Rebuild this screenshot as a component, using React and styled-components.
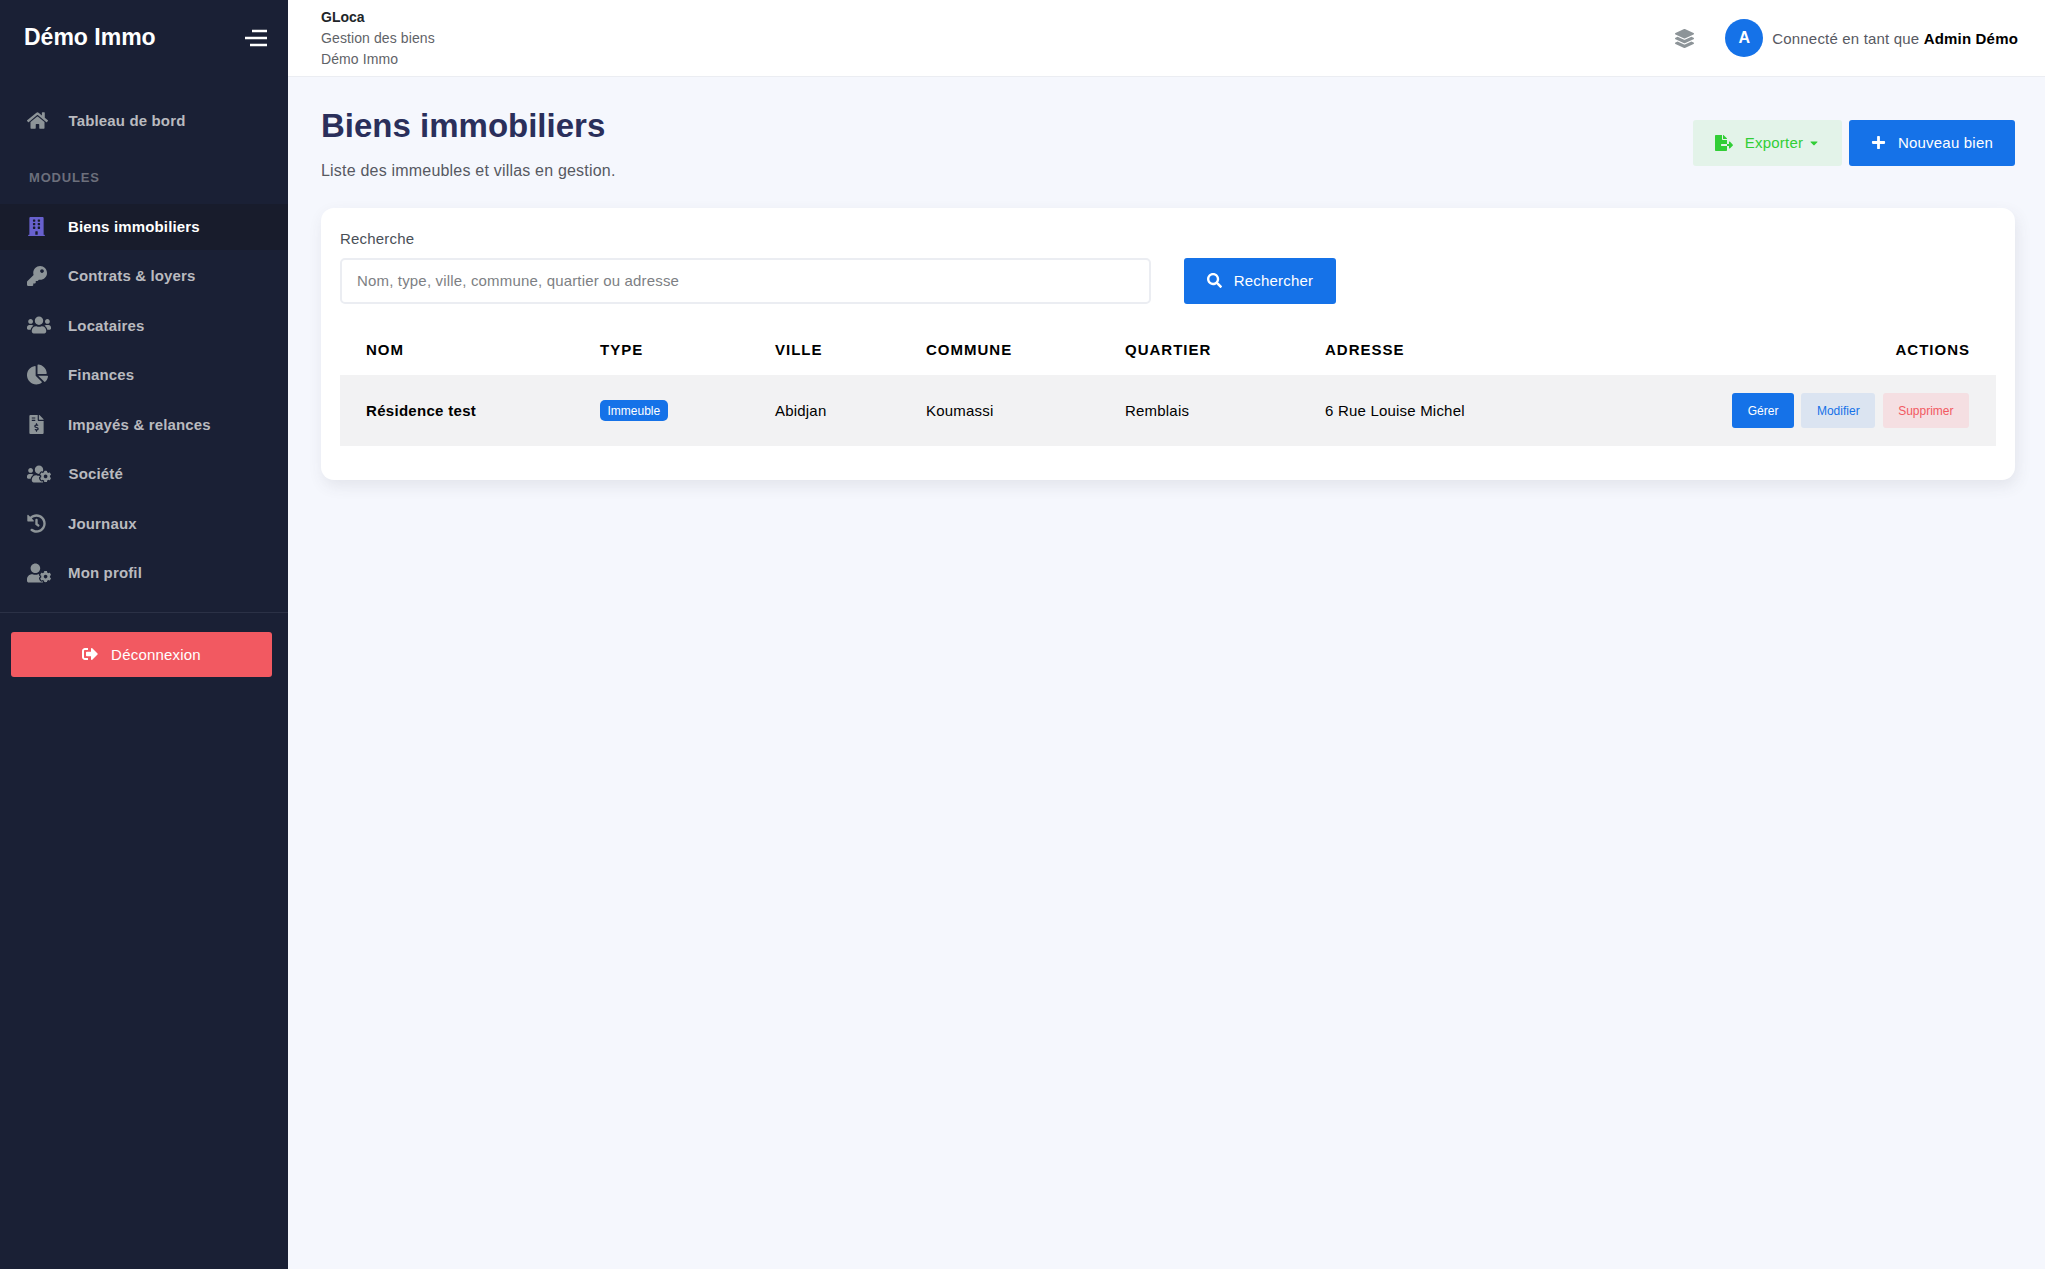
import React from 'react'
import styled, { createGlobalStyle } from 'styled-components'
import {
  FaHome,
  FaBuilding,
  FaKey,
  FaUsers,
  FaChartPie,
  FaFileInvoiceDollar,
  FaUsersCog,
  FaHistory,
  FaUserCog,
  FaSignOutAlt,
  FaLayerGroup,
  FaFileExport,
  FaPlus,
  FaSearch,
  FaCaretDown,
} from 'react-icons/fa'

const GlobalStyle = createGlobalStyle`
  html, body { margin: 0; padding: 0; height: 100%; }
  body {
    background: #f5f7fd;
    font-family: "Liberation Sans", Arial, sans-serif;
    color: #000;
  }
  * { box-sizing: border-box; }
`

const menu = [
  { label: 'Contrats & loyers', icon: FaKey, size: 20 },
  { label: 'Locataires', icon: FaUsers, size: 24 },
  { label: 'Finances', icon: FaChartPie, size: 21 },
  { label: 'Impayés & relances', icon: FaFileInvoiceDollar, size: 19 },
  { label: 'Société', icon: FaUsersCog, size: 24, shift: 0.5 },
  { label: 'Journaux', icon: FaHistory, size: 19 },
  { label: 'Mon profil', icon: FaUserCog, size: 24 },
]

const columns = [234, 175, 151, 199, 200, 310, 387]

const App = () => {
  return (
    <>
      <GlobalStyle />
      <Layout>
        <Sidebar>
          <Brand>
            <BrandName>Démo Immo</BrandName>
            <svg width="24" height="20" viewBox="0 0 24 20" fill="none" stroke="#fff" strokeWidth="2.4">
              <path d="M8 3h15M1 10h22M6 17h17" />
            </svg>
          </Brand>
          <Nav>
            <HomeItem>
              <IconSlot $shift={0.5}>
                <FaHome size={21} />
              </IconSlot>
              Tableau de bord
            </HomeItem>
            <SectionTitle>MODULES</SectionTitle>
            <ActiveItem>
              <IconSlot>
                <FaBuilding size={19} />
              </IconSlot>
              Biens immobiliers
            </ActiveItem>
            {menu.map((item) => (
              <NavItem key={item.label}>
                <IconSlot $shift={item.shift}>
                  <item.icon size={item.size} />
                </IconSlot>
                {item.label}
              </NavItem>
            ))}
          </Nav>
          <SidebarFooter>
            <LogoutButton>
              <FaSignOutAlt size={16} />
              Déconnexion
            </LogoutButton>
          </SidebarFooter>
        </Sidebar>

        <Main>
          <Topbar>
            <TopInfo>
              <AppName>GLoca</AppName>
              <AppLine>Gestion des biens</AppLine>
              <AppLine>Démo Immo</AppLine>
            </TopInfo>
            <TopRight>
              <LayerIcon>
                <FaLayerGroup size={19} />
              </LayerIcon>
              <Avatar>A</Avatar>
              <UserText>
                Connecté en tant que <strong>Admin Démo</strong>
              </UserText>
            </TopRight>
          </Topbar>

          <Page>
            <PageHeader>
              <div>
                <Title>Biens immobiliers</Title>
                <Subtitle>Liste des immeubles et villas en gestion.</Subtitle>
              </div>
              <HeaderActions>
                <ExportButton>
                  <FaFileExport size={18} />
                  Exporter
                  <FaCaretDown size={12} />
                </ExportButton>
                <PrimaryButton>
                  <FaPlus size={15} />
                  Nouveau bien
                </PrimaryButton>
              </HeaderActions>
            </PageHeader>

            <Card>
              <FieldLabel>Recherche</FieldLabel>
              <SearchRow>
                <SearchInput placeholder="Nom, type, ville, commune, quartier ou adresse" />
                <SearchButton>
                  <FaSearch size={15} />
                  Rechercher
                </SearchButton>
              </SearchRow>

              <Table>
                <colgroup>
                  {columns.map((width, i) => (
                    <col key={i} style={{ width }} />
                  ))}
                </colgroup>
                <thead>
                  <tr>
                    <Th>Nom</Th>
                    <Th>Type</Th>
                    <Th>Ville</Th>
                    <Th>Commune</Th>
                    <Th>Quartier</Th>
                    <Th>Adresse</Th>
                    <Th $right>Actions</Th>
                  </tr>
                </thead>
                <tbody>
                  <Row>
                    <Td>
                      <strong>Résidence test</strong>
                    </Td>
                    <Td>
                      <Badge>Immeuble</Badge>
                    </Td>
                    <Td>Abidjan</Td>
                    <Td>Koumassi</Td>
                    <Td>Remblais</Td>
                    <Td>6 Rue Louise Michel</Td>
                    <Td>
                      <RowActions>
                        <SmallButton $bg="#1572e8" $color="#fff">
                          Gérer
                        </SmallButton>
                        <SmallButton $bg="#dbe4f1" $color="#1572e8">
                          Modifier
                        </SmallButton>
                        <SmallButton $bg="#f5dfe2" $color="#f25961">
                          Supprimer
                        </SmallButton>
                      </RowActions>
                    </Td>
                  </Row>
                </tbody>
              </Table>
            </Card>
          </Page>
        </Main>
      </Layout>
    </>
  )
}

const Layout = styled.div`
  display: flex;
  min-height: 1269px;
`
const Sidebar = styled.aside`
  width: 288px;
  flex-shrink: 0;
  background: #1a2035;
`
const Brand = styled.div`
  height: 75px;
  padding: 0 20px 0 24px;
  display: flex;
  align-items: center;
  justify-content: space-between;
`
const BrandName = styled.div`
  color: #fff;
  font-size: 23px;
  font-weight: 700;
`
const Nav = styled.nav`
  padding-top: 21px;
  padding-bottom: 14px;
  border-bottom: 1px solid #2b3146;
`
const NavItem = styled.div`
  height: 49.5px;
  padding-left: 24px;
  display: flex;
  align-items: center;
  color: #b9babf;
  font-size: 15px;
  font-weight: 700;
  letter-spacing: 0.15px;
  svg {
    color: #8d9498;
  }
`
const HomeItem = styled(NavItem)`
  height: 48px;
`
const ActiveItem = styled(NavItem)`
  height: 46px;
  margin-bottom: 1px;
  padding-bottom: 1px;
  background: #181c2c;
  color: #fff;
  svg {
    color: #6861ce;
  }
`
const IconSlot = styled.span`
  width: ${(props) => 44 + (props.$shift || 0)}px;
  padding-left: 3px;
  display: flex;
  align-items: center;
`
const SectionTitle = styled.div`
  height: 36px;
  margin-top: 15px;
  margin-bottom: 9px;
  padding-left: 29px;
  display: flex;
  align-items: center;
  color: #6c6f7c;
  font-size: 13px;
  font-weight: 700;
  letter-spacing: 0.8px;
`
const SidebarFooter = styled.div`
  padding: 19px 16px 0 11px;
`
const LogoutButton = styled.button`
  width: 100%;
  height: 45px;
  border: none;
  border-radius: 3px;
  background: #f25961;
  color: #fff;
  display: flex;
  align-items: center;
  justify-content: center;
  gap: 13px;
  font-family: inherit;
  font-size: 15px;
  letter-spacing: 0.2px;
`
const Main = styled.div`
  flex: 1;
  min-width: 0;
`
const Topbar = styled.header`
  height: 77px;
  padding: 0 27px 0 33px;
  background: #fff;
  border-bottom: 1px solid #ebedf2;
  display: flex;
  align-items: center;
  justify-content: space-between;
`
const TopInfo = styled.div`
  font-size: 14px;
  line-height: 21px;
`
const AppName = styled.div`
  color: #212529;
  font-weight: 700;
`
const AppLine = styled.div`
  color: #5f6368;
  letter-spacing: 0.1px;
`
const TopRight = styled.div`
  display: flex;
  align-items: center;
`
const LayerIcon = styled.span`
  margin-right: 31px;
  display: flex;
  color: #8d9498;
`
const Avatar = styled.div`
  width: 38px;
  height: 38px;
  margin-right: 9px;
  border-radius: 50%;
  background: #1572e8;
  color: #fff;
  display: flex;
  align-items: center;
  justify-content: center;
  font-size: 16px;
  font-weight: 700;
`
const UserText = styled.div`
  color: #575962;
  font-size: 15px;
  letter-spacing: 0.18px;
  strong {
    color: #000;
    font-weight: 700;
  }
`
const Page = styled.main`
  padding: 26px 30px 0 33px;
`
const PageHeader = styled.div`
  display: flex;
  align-items: flex-start;
  justify-content: space-between;
  margin-bottom: 27px;
`
const Title = styled.h1`
  margin: 1px 0 13px;
  color: #2a2f5b;
  font-size: 33px;
  line-height: 44px;
  font-weight: 700;
`
const Subtitle = styled.p`
  margin: 0;
  color: #575962;
  font-size: 16px;
  line-height: 20px;
  letter-spacing: 0.2px;
`
const HeaderActions = styled.div`
  display: flex;
  gap: 7px;
  padding-top: 17px;
`
const ActionButton = styled.button`
  height: 46px;
  padding: 0 0 1px;
  border: none;
  border-radius: 3px;
  display: flex;
  align-items: center;
  justify-content: center;
  font-family: inherit;
  font-size: 15px;
  letter-spacing: 0.2px;
`
const ExportButton = styled(ActionButton)`
  width: 149px;
  gap: 12px;
  background: #e3f3e9;
  color: #31ce36;
  svg:last-child {
    margin-left: -7px;
  }
`
const PrimaryButton = styled(ActionButton)`
  width: 166px;
  gap: 12px;
  background: #1572e8;
  color: #fff;
`
const Card = styled.section`
  height: 272px;
  padding: 21px 19px;
  background: #fff;
  border-radius: 13px;
  box-shadow: 2px 6px 15px rgba(69, 65, 78, 0.1);
`
const FieldLabel = styled.label`
  display: block;
  margin-bottom: 10px;
  color: #495057;
  font-size: 15px;
  line-height: 19px;
  letter-spacing: 0.2px;
`
const SearchRow = styled.div`
  display: flex;
  gap: 33px;
  margin-bottom: 26px;
`
const SearchInput = styled.input`
  width: 811px;
  height: 46px;
  padding: 0 15px 1px;
  border: 2px solid #ebedf2;
  border-radius: 5px;
  background: #fff;
  font-family: inherit;
  font-size: 15px;
  letter-spacing: 0.17px;
  &::placeholder {
    color: #7d7f84;
    opacity: 1;
  }
`
const SearchButton = styled(PrimaryButton)`
  width: 152px;
  gap: 12px;
`
const Table = styled.table`
  width: 100%;
  table-layout: fixed;
  border-collapse: collapse;
`
const Th = styled.th`
  height: 45px;
  padding: 0 26px 6px;
  text-align: ${(props) => (props.$right ? 'right' : 'left')};
  color: #000;
  font-size: 15px;
  font-weight: 700;
  letter-spacing: 1px;
  text-transform: uppercase;
  white-space: nowrap;
`
const Row = styled.tr`
  height: 71px;
  background: #f2f2f3;
`
const Td = styled.td`
  padding: 0 26px;
  font-size: 15px;
  letter-spacing: 0.2px;
  white-space: nowrap;
  strong {
    font-weight: 700;
    letter-spacing: 0.3px;
  }
`
const Badge = styled.span`
  display: inline-flex;
  align-items: center;
  height: 21px;
  padding: 0 7.5px;
  border-radius: 5px;
  background: #1572e8;
  color: #fff;
  font-size: 12px;
  letter-spacing: 0;
  vertical-align: middle;
`
const RowActions = styled.div`
  display: flex;
  justify-content: flex-end;
  gap: 7.5px;
  margin-right: 1px;
`
const SmallButton = styled.button`
  height: 35px;
  padding: 0 15.5px;
  border: none;
  border-radius: 3px;
  background: ${(props) => props.$bg};
  color: ${(props) => props.$color};
  font-family: inherit;
  font-size: 12px;
  letter-spacing: 0;
`

export default App
